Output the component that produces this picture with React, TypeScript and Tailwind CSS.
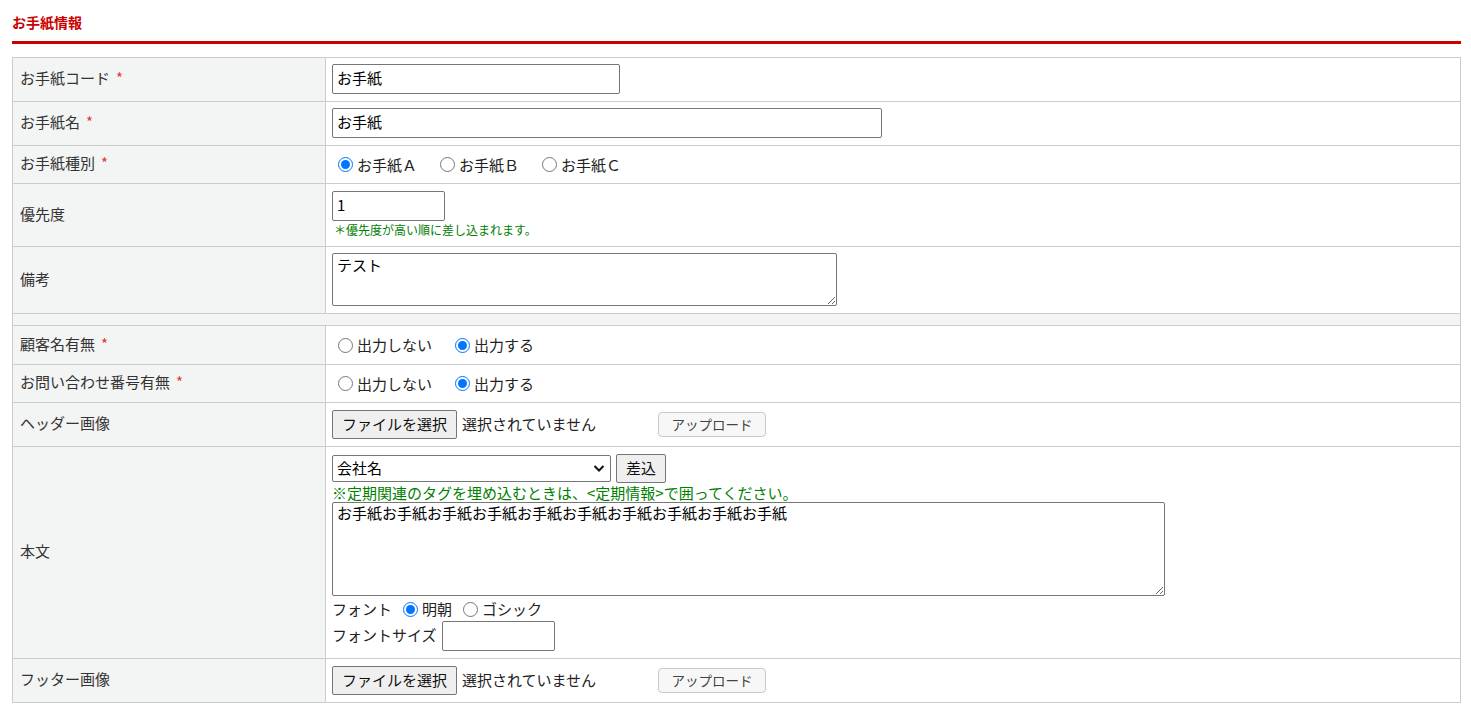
import React from 'react';

const font = { fontFamily: '"Noto Sans CJK JP", "Noto Sans", sans-serif' };

function Req() {
  return <span className="ml-[6px] text-[#e53935]">*</span>;
}

function Label({ children, required }: { children: React.ReactNode; required?: boolean }) {
  return (
    <td className="w-[313px] border border-[#cccccc] bg-[#f3f4f4] pb-[3px] pl-[7px] align-middle text-[15px] leading-[20px] text-[#333]">
      {children}
      {required && <Req />}
    </td>
  );
}

function Radio({ name, label, checked }: { name: string; label: string; checked?: boolean }) {
  return (
    <label className="flex items-center">
      <input type="radio" name={name} defaultChecked={checked} className="m-0 ml-[6px] mr-[4px] h-[15px] w-[15px] accent-[#0075ff]" />
      <span>{label}</span>
    </label>
  );
}

function FileField() {
  return (
    <div className="flex items-center">
      <button className="h-[29px] w-[125px] rounded-[2px] border border-[#767676] bg-[#efefef] pb-[2px] text-[15px] text-[#111]">ファイルを選択</button>
      <span className="ml-[5px] w-[196px] pb-[2px] text-[15px] text-[#222]">選択されていません</span>
      <button className="h-[25px] w-[108px] rounded-[4px] border border-[#c8c8c8] bg-[#f7f7f7] pb-[2px] text-[13.5px] text-[#444]">アップロード</button>
    </div>
  );
}

const val = 'border border-[#cccccc] bg-white pl-[6px] align-middle text-[15px] leading-[20px] text-[#222]';
const box = 'rounded-[2px] border border-[#767676] bg-white px-[4px] text-[15px] text-black outline-none';

export default function App() {
  return (
    <div className="min-h-screen bg-white pl-[12px] pr-[10px]" style={font}>
      <h2 className="pt-[13px] text-[14px] font-bold leading-[18px] text-[#cc0000]">お手紙情報</h2>
      <div className="mt-[10px] h-[3px] bg-[#cc0000]" />
      <table className="mt-[13px] w-full border-collapse">
        <tbody>
          <tr className="h-[44px]">
            <Label required>お手紙コード</Label>
            <td className={val}>
              <input defaultValue="お手紙" className={`${box} -mt-[1px] block h-[30px] w-[288px] pb-[3px]`} />
            </td>
          </tr>
          <tr className="h-[44px]">
            <Label required>お手紙名</Label>
            <td className={val}>
              <input defaultValue="お手紙" className={`${box} -mt-[1px] block h-[30px] w-[550px] pb-[3px]`} />
            </td>
          </tr>
          <tr className="h-[38px]">
            <Label required>お手紙種別</Label>
            <td className={val}>
              <div className="flex gap-[17px]">
                <Radio name="kind" label="お手紙Ａ" checked />
                <Radio name="kind" label="お手紙Ｂ" />
                <Radio name="kind" label="お手紙Ｃ" />
              </div>
            </td>
          </tr>
          <tr className="h-[63px]">
            <Label>優先度</Label>
            <td className={val}>
              <input defaultValue="1" className={`${box} -mt-[1px] block h-[30px] w-[113px] pb-[3px]`} />
              <div className="mt-[1px] pl-[2px] text-[12px] leading-[16px] text-[#008000]">＊優先度が高い順に差し込まれます。</div>
            </td>
          </tr>
          <tr className="h-[67px]">
            <Label>備考</Label>
            <td className={val}>
              <textarea defaultValue="テスト" className={`${box} -mt-[1px] block h-[53px] w-[505px] py-[1px] leading-[20px]`} />
            </td>
          </tr>
          <tr className="h-[12px]">
            <td colSpan={2} className="border border-[#cccccc] bg-[#f3f4f4] p-0" />
          </tr>
          <tr className="h-[39px]">
            <Label required>顧客名有無</Label>
            <td className={val}>
              <div className="flex gap-[17px]">
                <Radio name="cust" label="出力しない" />
                <Radio name="cust" label="出力する" checked />
              </div>
            </td>
          </tr>
          <tr className="h-[38px]">
            <Label required>お問い合わせ番号有無</Label>
            <td className={val}>
              <div className="flex gap-[17px]">
                <Radio name="inq" label="出力しない" />
                <Radio name="inq" label="出力する" checked />
              </div>
            </td>
          </tr>
          <tr className="h-[44px]">
            <Label>ヘッダー画像</Label>
            <td className={val}>
              <FileField />
            </td>
          </tr>
          <tr className="h-[212px]">
            <Label>本文</Label>
            <td className={val}>
              <div className="flex h-[29px] items-center gap-[5px]">
                <div className="relative">
                  <select className={`${box} block h-[27px] w-[279px] appearance-none pr-[24px] pb-[2px]`}>
                    <option>会社名</option>
                  </select>
                  <svg className="pointer-events-none absolute right-[6px] top-[9px]" width="12" height="9" viewBox="0 0 12 9">
                    <path d="M1.5 2 L6 6.5 L10.5 2" fill="none" stroke="#111" strokeWidth="2" />
                  </svg>
                </div>
                <button className="h-[29px] w-[50px] rounded-[2px] border border-[#767676] bg-[#efefef] pb-[2px] text-[15px] text-[#111]">差込</button>
              </div>
              <div className="h-[20px] text-[15px] leading-[19px] text-[#008000]">※定期関連のタグを埋め込むときは、&lt;定期情報&gt;で囲ってください。</div>
              <textarea
                defaultValue="お手紙お手紙お手紙お手紙お手紙お手紙お手紙お手紙お手紙お手紙"
                className={`${box} -mt-[1px] block h-[94px] w-[833px] py-0 leading-[20px]`}
              />
              <div className="flex h-[26px] items-center">
                <span>フォント</span>
                <label className="flex items-center">
                  <input type="radio" name="font" defaultChecked className="m-0 ml-[11px] mr-[4px] h-[15px] w-[15px] accent-[#0075ff]" />
                  <span>明朝</span>
                </label>
                <label className="flex items-center">
                  <input type="radio" name="font" className="m-0 ml-[11px] mr-[4px] h-[15px] w-[15px] accent-[#0075ff]" />
                  <span>ゴシック</span>
                </label>
              </div>
              <div className="-mt-[1px] flex h-[30px] items-center gap-[5px]">
                <span className="pb-[2px]">フォントサイズ</span>
                <input className={`${box} block h-[30px] w-[113px]`} />
              </div>
            </td>
          </tr>
          <tr className="h-[44px]">
            <Label>フッター画像</Label>
            <td className={val}>
              <FileField />
            </td>
          </tr>
        </tbody>
      </table>
    </div>
  );
}
